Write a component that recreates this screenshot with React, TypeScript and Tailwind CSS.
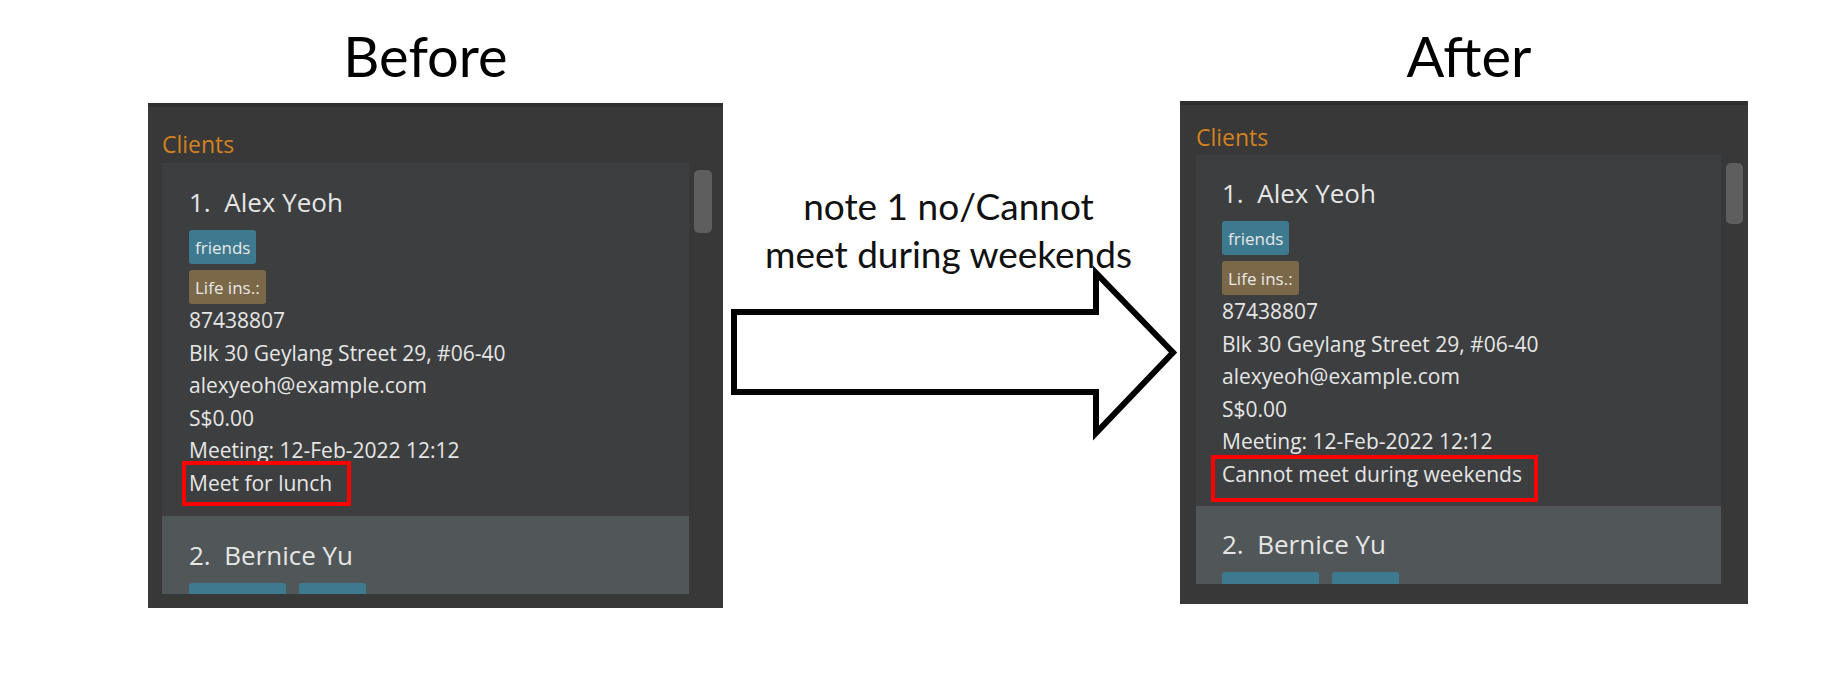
import clsx from "clsx";

const clients = [
  {
    name: "Alex Yeoh",
    tags: ["friends"],
    insurance: ["Life ins.:"],
    lines: [
      "87438807",
      "Blk 30 Geylang Street 29, #06-40",
      "alexyeoh@example.com",
      "S$0.00",
      "Meeting: 12-Feb-2022 12:12",
    ],
  },
  {
    name: "Bernice Yu",
  },
];

function Tag({ label, life }: { label: string; life?: boolean }) {
  return (
    <span
      className={clsx(
        "flex h-[34px] items-center rounded-[3px] px-[6px] text-[17px] leading-none text-[#e8e8e8]",
        life ? "bg-[#7b6849]" : "bg-[#3d7a90]"
      )}
    >
      {label}
    </span>
  );
}

function ClientPanel({ after }: { after?: boolean }) {
  const first = clients[0];
  const second = clients[1];
  const note = after ? "Cannot meet during weekends" : "Meet for lunch";

  return (
    <div
      className={clsx(
        "flex flex-col border-t-4 border-[#2f2f2f] bg-[#383838] font-['Open_Sans',sans-serif]",
        after ? "h-[503px] w-[568px] pl-[16px]" : "h-[505px] w-[575px] pl-[14px]"
      )}
    >
      <div
        className={clsx(
          "text-[23px] leading-none text-[#d3821f]",
          after ? "pt-[21px]" : "pt-[26px]"
        )}
      >
        Clients
      </div>

      <div className={clsx("flex", after ? "mt-[6px]" : "mt-[7px]")}>
        {/* list */}
        <div
          className={clsx(
            "flex flex-col overflow-hidden bg-[#3c3e3f] text-[#e6e6e6]",
            after ? "h-[429px] w-[525px]" : "h-[431px] w-[527px]"
          )}
        >
          <div
            className={clsx(
              "flex flex-col",
              after ? "pb-[16px] pl-[26px] pt-[25px]" : "pb-[17px] pl-[27px] pt-[26px]"
            )}
          >
            <div className="whitespace-pre text-[26px] leading-none">
              {"1.  " + first.name}
            </div>
            <div className="mt-[15px] flex flex-col items-start gap-[6px]">
              {first.tags?.map((t) => (
                <Tag key={t} label={t} />
              ))}
              {first.insurance?.map((t) => (
                <Tag key={t} label={t} life />
              ))}
            </div>
            <div className="text-[21px] leading-[32.5px]">
              {first.lines?.map((l) => (
                <div key={l}>{l}</div>
              ))}
              <div className="relative">
                {note}
                {/* annotation box */}
                <div
                  className={clsx(
                    "absolute border-4 border-[#ff0000]",
                    after
                      ? "-left-[11px] -top-[3px] h-[47px] w-[327px]"
                      : "-left-[7px] -top-[6px] h-[45px] w-[169px]"
                  )}
                />
              </div>
            </div>
          </div>

          <div
            className={clsx(
              "flex flex-col bg-[#515658]",
              after ? "pl-[26px] pt-[25px]" : "pl-[27px] pt-[26px]"
            )}
          >
            <div className="whitespace-pre text-[26px] leading-none">
              {"2.  " + second.name}
            </div>
            {/* tags cut off by the list edge */}
            <div className="mt-[15px] flex gap-[13px]">
              <span className="h-[34px] w-[97px] rounded-[3px] bg-[#3d7a90]" />
              <span className="h-[34px] w-[67px] rounded-[3px] bg-[#3d7a90]" />
            </div>
          </div>
        </div>

        {/* scrollbar thumb */}
        <div
          className={clsx(
            "ml-[5px] rounded-[5px] bg-[#5e5e5e]",
            after ? "mt-[8px] h-[61px] w-[17px]" : "mt-[7px] h-[63px] w-[18px]"
          )}
        />
      </div>
    </div>
  );
}

export default function App() {
  return (
    <div className="flex h-[700px] w-[1848px] bg-white pl-[148px] text-black">
      {/* Before */}
      <div className="flex w-[575px] flex-col">
        <div className="h-[103px] pr-[20px] pt-[28px] text-center font-['Lato',sans-serif] text-[56px] leading-none">
          Before
        </div>
        <ClientPanel />
      </div>

      {/* Command + arrow */}
      <div className="ml-[8px] flex w-[449px] flex-col">
        <div className="relative z-10 pr-[14px] pt-[182px] text-center font-['Lato',sans-serif] text-[37px] leading-[48px] text-[#111]">
          <div>note 1 no/Cannot</div>
          <div>meet during weekends</div>
        </div>
        <svg
          width="449"
          height="180"
          viewBox="0 0 449 180"
          className="-mt-[16px] overflow-visible"
        >
          <polygon
            points="3,50 365,50 365,11 442,90.5 365,171 365,130 3,130"
            fill="white"
            stroke="black"
            strokeWidth="6"
            strokeLinejoin="miter"
            strokeMiterlimit="10"
          />
        </svg>
      </div>

      {/* After */}
      <div className="flex w-[568px] flex-col">
        <div className="h-[101px] pl-[10px] pt-[28px] text-center font-['Lato',sans-serif] text-[56px] leading-none">
          After
        </div>
        <ClientPanel after />
      </div>
    </div>
  );
}
